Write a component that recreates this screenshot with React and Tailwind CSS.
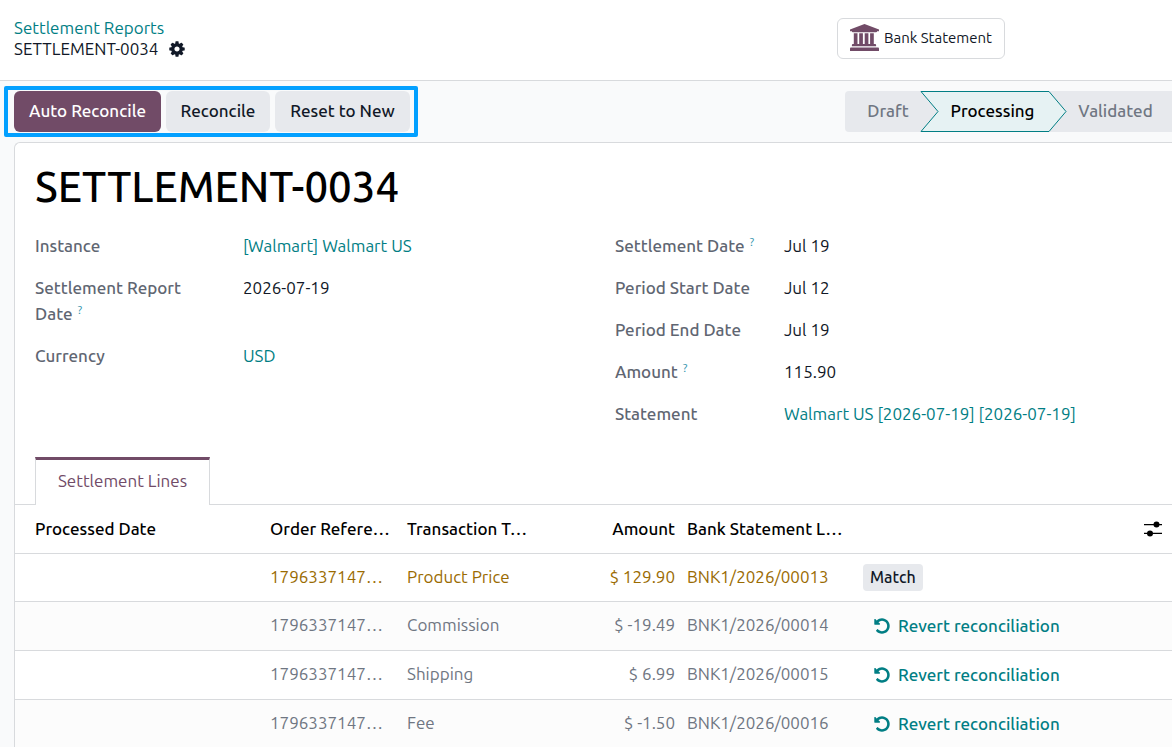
import React, { useState } from "react";

const lines = [
  { id: 1, order: "1796337147…", type: "Product Price", amount: "$ 129.90", bank: "BNK1/2026/00013", matched: false },
  { id: 2, order: "1796337147…", type: "Commission", amount: "$ -19.49", bank: "BNK1/2026/00014", matched: true },
  { id: 3, order: "1796337147…", type: "Shipping", amount: "$ 6.99", bank: "BNK1/2026/00015", matched: true },
  { id: 4, order: "1796337147…", type: "Fee", amount: "$ -1.50", bank: "BNK1/2026/00016", matched: true },
];

function GearIcon() {
  return (
    <svg viewBox="0 0 1792 1792" className="size-[18px]" fill="currentColor" aria-hidden="true">
      <path d="M1152 896q0-106-75-181t-181-75-181 75-75 181 75 181 181 75 181-75 75-181zm512-109v222q0 12-8 23t-20 13l-185 28q-19 54-39 91 35 50 107 138 10 12 10 25t-9 23q-27 37-99 108t-94 71q-12 0-26-9l-138-108q-44 23-91 38-16 136-29 186-7 28-36 28h-222q-14 0-24.500-8.500t-11.500-21.500l-28-184q-49-16-90-37l-141 107q-10 9-25 9-14 0-25-11-126-114-165-168-7-10-7-23 0-12 8-23 15-21 51-66.500t54-70.500q-27-50-41-99l-183-27q-13-2-21-12.500t-8-23.500v-222q0-12 8-23t19-13l186-28q14-46 39-92-40-57-107-138-10-12-10-24 0-10 9-23 26-36 98.500-107.500t94.500-71.500q13 0 26 10l138 107q44-23 91-38 16-136 29-186 7-28 36-28h222q14 0 24.500 8.500t11.500 21.500l28 184q49 16 90 37l142-107q9-9 24-9 13 0 25 10 129 119 165 170 7 8 7 22 0 12-8 23-15 21-51 66.500t-54 70.500q26 50 41 98l183 28q13 2 21 12.500t8 23.500z" />
    </svg>
  );
}

function BankIcon() {
  return (
    <svg viewBox="0 0 29 27" className="h-[27px] w-[29px] text-[#714b67]" fill="currentColor" aria-hidden="true">
      <path d="M14.500 0L29 5.500v1.800h-1.900c0 .5-.4 .9-.9 .9H2.800c-.5 0-.9-.4-.9-.9H0V5.500z" />
      <path d="M3.800 9.200h3.700V20h1.700V9.200h3.700V20h1.800V9.200h3.700V20h1.700V9.200h3.700V20h1.400c.5 0 .9 .4 .9 .9v1.300H1.900v-1.300c0-.5 .4-.9 .9-.9h1z" />
      <path d="M.9 23.400h27.200c.5 0 .9 .4 .9 .9V27H0v-2.700c0-.5 .4-.9 .9-.9z" />
    </svg>
  );
}

function UndoIcon() {
  return (
    <svg viewBox="0 0 1792 1792" className="size-[18px]" fill="currentColor" aria-hidden="true">
      <path d="M1664 896q0 156-61 298t-164 245-245 164-298 61q-172 0-327-72.500t-264-204.500q-7-10-6.500-22.500t8.500-20.500l137-138q10-9 25-9 16 2 23 12 73 95 179 147t225 52q104 0 198.500-40.500t163.500-109.500 109.500-163.500 40.500-198.500-40.500-198.500-109.500-163.500-163.500-109.500-198.500-40.500q-98 0-188 35.500t-160 101.500l137 138q31 30 14 69-17 40-59 40h-448q-26 0-45-19t-19-45v-448q0-42 40-59 39-17 69 14l130 129q107-101 244.500-156.500t284.500-55.500q156 0 298 61t245 164 164 245 61 298z" />
    </svg>
  );
}

function SlidersIcon() {
  return (
    <svg viewBox="0 0 18 16" className="h-4 w-[18px]" fill="currentColor" aria-hidden="true">
      <path d="M0 3h18v1.200H0zM0 11.800h18v1.200H0z" />
      <circle cx="12.500" cy="3.600" r="3" />
      <circle cx="6" cy="12.400" r="3" />
    </svg>
  );
}

function Field({ label, help, labelWidth, children }) {
  return (
    <div className="flex">
      <dt className={`${labelWidth} shrink-0 font-medium text-[#5f6672]`}>
        {label}
        {help && <sup className="ml-[5px] text-[12px] font-normal text-[#2f93ad]">?</sup>}
      </dt>
      <dd>{children}</dd>
    </div>
  );
}

function StatusBar() {
  return (
    <div className="flex h-[41px] rounded-l-sm bg-[#e7e9ed] font-medium text-[#6f7682]">
      <button type="button" className="w-[75px] pb-0.5 pl-[11px]">Draft</button>
      <button type="button" aria-current="step" className="relative w-[147px] pb-0.5 pr-0.5 text-black">
        <svg viewBox="0 0 147 41" className="absolute inset-0 h-full w-full" aria-hidden="true">
          <path d="M1 .5H129L146 20.500L129 40.500H1L18 20.500z" fill="#e6f2f3" stroke="#017e84" />
        </svg>
        <span className="relative">Processing</span>
      </button>
      <button type="button" className="w-[105px] pr-2 pb-0.5">Validated</button>
    </div>
  );
}

function LinesTable() {
  const [rows, setRows] = useState(lines);

  const toggleMatch = (id) => {
    setRows((prev) =>
      prev.map((row) => (row.id === id ? { ...row, matched: !row.matched } : row))
    );
  };

  return (
    <table className="w-full table-fixed border-collapse">
      <colgroup>
        <col className="w-[249px]" />
        <col className="w-[137px]" />
        <col className="w-[136px]" />
        <col className="w-[144px]" />
        <col className="w-[176px]" />
        <col />
        <col className="w-[38px]" />
      </colgroup>
      <thead>
        <tr className="h-12 border-b border-[#d8dadd] text-left whitespace-nowrap text-black">
          <th className="pl-5 font-medium">Processed Date</th>
          <th className="px-1.5 font-medium">Order Refere…</th>
          <th className="px-1.5 font-medium">Transaction T…</th>
          <th className="px-1.5 text-right font-medium">Amount</th>
          <th className="px-1.5 font-medium">Bank Statement L…</th>
          <th></th>
          <th>
            <button type="button" aria-label="Optional columns" className="flex w-full justify-center">
              <SlidersIcon />
            </button>
          </th>
        </tr>
      </thead>
      <tbody>
        {rows.map((row) => (
          <tr
            key={row.id}
            className={`border-b border-[#d8dadd] whitespace-nowrap even:bg-[#fcfcfc] ${
              row.matched ? "h-[49px] text-[#6f7682]" : "h-12 text-[#9a6b01]"
            }`}
          >
            <td></td>
            <td className="px-1.5 pb-px">{row.order}</td>
            <td className="px-1.5 pb-px">{row.type}</td>
            <td className="px-1.5 pb-px text-right">{row.amount}</td>
            <td className="px-1.5 pb-px">{row.bank}</td>
            <td className="px-1.5">
              {row.matched ? (
                <button
                  type="button"
                  onClick={() => toggleMatch(row.id)}
                  className="flex items-center gap-[7px] pl-2.5 font-medium text-[#017e84]"
                >
                  <UndoIcon />
                  Revert reconciliation
                </button>
              ) : (
                <button
                  type="button"
                  onClick={() => toggleMatch(row.id)}
                  className="block h-[27px] rounded-sm bg-[#e7e9ed] px-[7px] text-[16px] leading-[26px] font-medium text-[#111827]"
                >
                  Match
                </button>
              )}
            </td>
            <td></td>
          </tr>
        ))}
      </tbody>
    </table>
  );
}

function App() {
  return (
    <div className="h-screen overflow-hidden bg-[#f9fafb] font-['Ubuntu','Noto_Sans',sans-serif] text-[17px] leading-[26px] text-[#111827]">
      <header className="flex h-[81px] items-start border-b border-[#d8dadd] bg-white pt-[18px] pl-3.5">
        <div className="-mt-px flex-1 leading-[21px]">
          <a href="#reports" className="block text-[#017e84]">Settlement Reports</a>
          <div className="flex items-center gap-2.5">
            <span>SETTLEMENT-0034</span>
            <button type="button" aria-label="Actions">
              <GearIcon />
            </button>
          </div>
        </div>
        <button
          type="button"
          className="mr-[167px] flex h-[41px] items-center gap-[5px] rounded-md border border-[#d8dadd] px-3 pb-0.5 text-[15px]"
        >
          <BankIcon />
          Bank Statement
        </button>
      </header>

      <div className="flex items-center justify-between py-[5px] pl-1">
        <div className="flex gap-[5px] rounded-xs border-4 border-[#03a0ff] py-px pr-1 pl-1.5 font-medium">
          <button type="button" className="h-[41px] w-[147px] rounded-md bg-[#714b67] pb-0.5 text-white">
            Auto Reconcile
          </button>
          <button type="button" className="h-[41px] w-[104px] rounded-md bg-[#e7e9ed] pb-0.5">
            Reconcile
          </button>
          <button type="button" className="h-[41px] w-[135px] rounded-md bg-[#e7e9ed] pb-0.5">
            Reset to New
          </button>
        </div>
        <StatusBar />
      </div>

      <main className="ml-3.5 min-h-screen rounded-tl-md border-t border-l border-[#d8dadd] bg-white">
        <h1 className="px-5 pt-4 text-[42px] leading-[56px] font-medium text-black">SETTLEMENT-0034</h1>

        <div className="flex px-5 pt-[18px]">
          <dl className="flex w-[580px] flex-col gap-4">
            <Field label="Instance" labelWidth="w-52 pr-10">
              <a href="#instance" className="text-[#017e84]">[Walmart] Walmart US</a>
            </Field>
            <Field label="Settlement Report Date" help labelWidth="w-52 pr-10">2026-07-19</Field>
            <Field label="Currency" labelWidth="w-52 pr-10">
              <a href="#currency" className="text-[#017e84]">USD</a>
            </Field>
          </dl>
          <dl className="flex flex-1 flex-col gap-4">
            <Field label="Settlement Date" help labelWidth="w-[169px]">Jul 19</Field>
            <Field label="Period Start Date" labelWidth="w-[169px]">Jul 12</Field>
            <Field label="Period End Date" labelWidth="w-[169px]">Jul 19</Field>
            <Field label="Amount" help labelWidth="w-[169px]">115.90</Field>
            <Field label="Statement" labelWidth="w-[169px]">
              <a href="#statement" className="text-[#017e84]">Walmart US [2026-07-19] [2026-07-19]</a>
            </Field>
          </dl>
        </div>

        <div role="tablist" className="mt-[30px] flex border-b border-[#d8dadd] pl-5">
          <button
            type="button"
            role="tab"
            aria-selected="true"
            className="-mb-px h-12 w-[175px] border-x border-t-3 border-x-[#d8dadd] border-t-[#714b67] bg-white pb-[3px] text-[#714b67]"
          >
            Settlement Lines
          </button>
        </div>

        <LinesTable />
      </main>
    </div>
  );
}

export default App;
